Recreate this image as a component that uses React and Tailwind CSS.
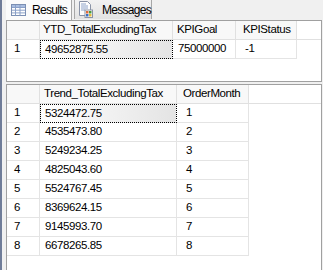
import React from "react";

const top = [{ ytd: "49652875.55", goal: "75000000", status: "-1" }];

const trend = [
  ["5324472.75", "1"],
  ["4535473.80", "2"],
  ["5249234.25", "3"],
  ["4825043.60", "4"],
  ["5524767.45", "5"],
  ["8369624.15", "6"],
  ["9145993.70", "7"],
  ["6678265.85", "8"],
];

function GridIcon() {
  return (
    <svg width="15" height="12" viewBox="0 0 15 12" className="shrink-0">
      <rect x="0.5" y="0.5" width="14" height="11" fill="#fff" stroke="#7b8fb3" />
      <rect x="1" y="1" width="13" height="2.5" fill="#a9bde0" />
      <path d="M1 3.5H14M1 6.2H14M1 8.9H14M4.5 1V11.5M9 1V11.5" stroke="#8aa0c8" strokeWidth="1" />
    </svg>
  );
}

function MessagesIcon() {
  return (
    <svg width="14" height="17" viewBox="0 0 14 17" className="shrink-0">
      <path d="M0.5 0.5H8.5L11.5 3.5V14.5H0.5Z" fill="#fdfdfd" stroke="#8a93a6" />
      <path d="M2 3H7M2 5H9M2 7H9M2 9H6" stroke="#8fa4c9" strokeWidth="1" />
      <rect x="6" y="9" width="7.5" height="7.5" fill="#fff" stroke="#8a93a6" />
      <rect x="7" y="10" width="2.5" height="2.5" fill="#e06a3a" />
      <rect x="10" y="10" width="2.5" height="2.5" fill="#4a9a3e" />
      <rect x="7" y="13" width="2.5" height="2.5" fill="#3b6fc4" />
      <rect x="10" y="13" width="2.5" height="2.5" fill="#e2b83a" />
    </svg>
  );
}

function HeadCell({ w, pl, children }) {
  return (
    <div
      className={`${w} ${pl} h-full shrink-0 flex items-center border-r border-[#e0e0e0] bg-[#f8f8f8] whitespace-nowrap overflow-hidden`}
    >
      {children}
    </div>
  );
}

export default function App() {
  return (
    <div className="w-[323px] h-[270px] flex overflow-hidden bg-[#f0f0f0] text-black text-[11.5px] tracking-[-0.4px] font-['Liberation_Sans',Arial,sans-serif]">
      <div className="w-[2px] shrink-0 bg-[#6f7c98]" />
      <div className="flex-1 flex flex-col pl-[4px] pr-[1px]">
        {/* tabs */}
        <div className="h-[20px] shrink-0 flex items-end">
          <div className="w-[66px] h-[20px] flex items-center gap-[6px] pl-[5px] bg-[#fbfbfb] border-r border-[#a7a7a7] text-[12px] tracking-[-0.7px]">
            <GridIcon />
            <span>Results</span>
          </div>
          <div className="ml-[2px] w-[78px] h-[19px] mb-[1px] flex items-center gap-[9px] pl-[4px] bg-gradient-to-b from-[#f2f2f2] to-[#e2e2e2] border border-b-0 border-t-0 border-[#a7a7a7] text-[12px] tracking-[-0.7px]">
            <MessagesIcon />
            <span>Messages</span>
          </div>
        </div>

        {/* top result set */}
        <div className="h-[62px] shrink-0 bg-white border border-[#a0a0a0]">
          <div className="h-[19px] flex border-b border-[#e0e0e0]">
            <HeadCell w="w-[33px]" pl="pl-0" />
            <HeadCell w="w-[133px]" pl="pl-[3px]">YTD_TotalExcludingTax</HeadCell>
            <HeadCell w="w-[63px]" pl="pl-[4px]">KPIGoal</HeadCell>
            <HeadCell w="w-[61px]" pl="pl-[7px]">KPIStatus</HeadCell>
          </div>
          {top.map((r, i) => (
            <div key={i} className="h-[19px] flex">
              <div className="w-[33px] shrink-0 flex items-center pl-[7px] border-r border-b border-[#e4e4e4]">
                {i + 1}
              </div>
              <div className="w-[133px] shrink-0 flex items-center pl-[4px] border border-dotted border-black bg-gradient-to-r from-white to-[#e4e4e4]">
                {r.ytd}
              </div>
              <div className="w-[63px] shrink-0 flex items-center pl-[5px] border-r border-b border-[#e4e4e4]">
                {r.goal}
              </div>
              <div className="w-[61px] shrink-0 flex items-center pl-[9px] border-r border-b border-[#e4e4e4]">
                {r.status}
              </div>
            </div>
          ))}
        </div>

        <div className="h-[2px] shrink-0" />

        {/* trend result set */}
        <div className="flex-1 bg-white border border-b-0 border-[#a0a0a0]">
          <div className="h-[19px] flex border-b border-[#e0e0e0]">
            <HeadCell w="w-[33px]" pl="pl-0" />
            <HeadCell w="w-[137px]" pl="pl-[4px]">Trend_TotalExcludingTax</HeadCell>
            <HeadCell w="w-[72px]" pl="pl-[6px]">OrderMonth</HeadCell>
          </div>
          {trend.map(([v, m], i) => (
            <div key={i} className="h-[19px] flex">
              <div className="w-[33px] shrink-0 flex items-center pl-[7px] border-r border-b border-[#e4e4e4]">
                {i + 1}
              </div>
              {i === 0 ? (
                <div className="w-[137px] shrink-0 flex items-center pl-[4px] border border-dotted border-black bg-gradient-to-r from-white to-[#e4e4e4]">
                  {v}
                </div>
              ) : (
                <div className="w-[137px] shrink-0 flex items-center pl-[5px] border-r border-b border-[#e4e4e4]">
                  {v}
                </div>
              )}
              <div className="w-[72px] shrink-0 flex items-center pl-[9px] border-r border-b border-[#e4e4e4]">
                {m}
              </div>
            </div>
          ))}
        </div>
      </div>
    </div>
  );
}
